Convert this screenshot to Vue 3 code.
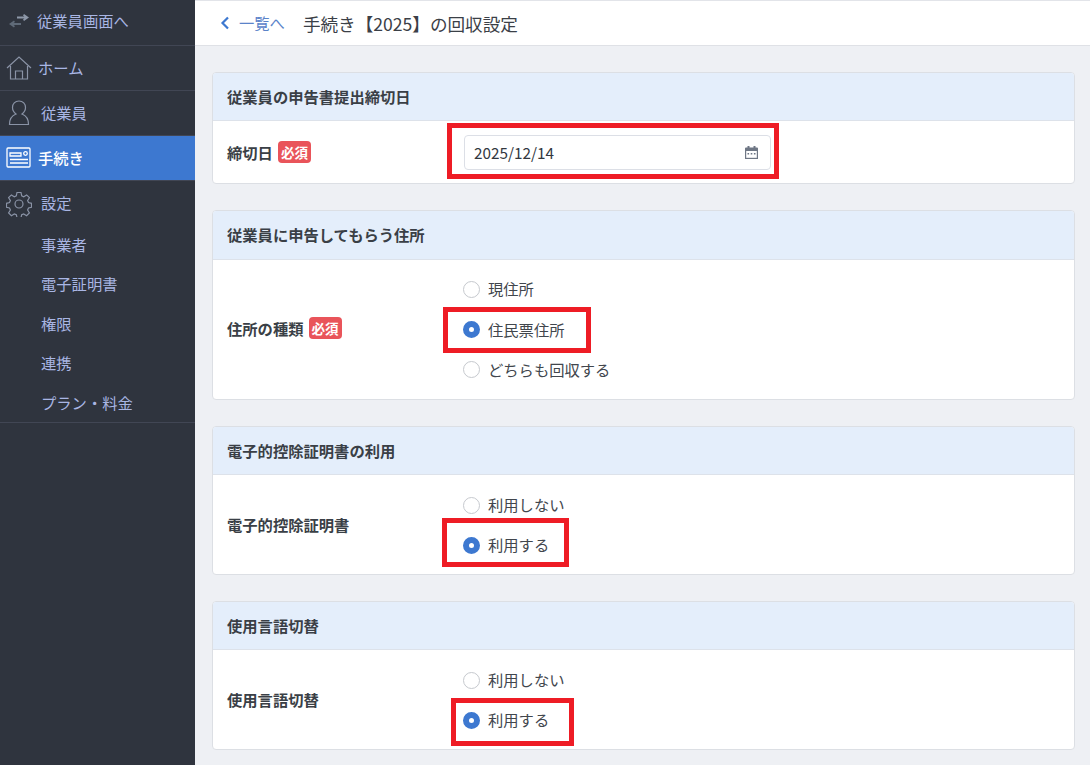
<template>
  <div class="page">
    <aside class="sidebar">
      <div class="side-row top">
        <svg class="swap" width="20" height="14" viewBox="0 0 20 14">
          <path d="M8 3.500h10M14.500 0.800 18.500 3.500 14.500 6.200" fill="none" stroke="#8d97a8" stroke-width="1.800" />
          <path d="M12 10H2M5.500 7.300 1.500 10 5.500 12.700" fill="none" stroke="#5f6a78" stroke-width="1.800" />
        </svg>
        <span>従業員画面へ</span>
      </div>
      <div class="side-row">
        <svg class="ico" width="26" height="24" viewBox="0 0 26 24" fill="none" stroke="#8a93a6" stroke-width="1.200">
          <path d="M1 12 13 1l12 11M4.500 10v13h17V10M9.500 23v-8h7v8" />
        </svg>
        <span>ホーム</span>
      </div>
      <div class="side-row">
        <svg class="ico" width="26" height="26" viewBox="0 0 26 26" fill="none" stroke="#8a93a6" stroke-width="1.200">
          <path d="M13 1c-4 0-6.500 2.800-6.500 6.500 0 3 1.500 5 3.500 6.500-4 1.500-6.500 4.500-6.500 10.500h19c0-6-2.500-9-6.500-10.500 2-1.500 3.500-3.500 3.500-6.500C19.500 3.800 17 1 13 1Z" />
        </svg>
        <span class="wide">従業員</span>
      </div>
      <div class="side-row active">
        <svg class="ico" width="26" height="22" viewBox="0 0 26 22" fill="none" stroke="#fff" stroke-width="1.300">
          <rect x="1" y="1" width="23" height="19" rx="1" />
          <path d="M4 6h11v3H4zM4 12.500h18M4 16h18" />
          <circle cx="19.500" cy="6.500" r="1.800" />
        </svg>
        <span>手続き</span>
      </div>
      <div class="side-row plain">
        <svg class="ico" width="26" height="26" viewBox="0 0 26 26" fill="none" stroke="#8a93a6" stroke-width="1.200">
          <circle cx="13" cy="13" r="4" />
          <path d="M11 1.500h4l.7 3.300 2 .9 2.900-1.800 2.800 2.800-1.800 2.900.9 2 3 .7v4l-3 .7-.9 2 1.800 2.900-2.800 2.800-2.900-1.800-2 .9-.7 2.700h-4l-.7-2.700-2-.9-2.900 1.800-2.800-2.800 1.800-2.900-.9-2-3-.7v-4l3-.7.9-2-1.800-2.900 2.800-2.800 2.900 1.800 2-.9Z" />
        </svg>
        <span class="wide">設定</span>
      </div>
      <ul class="sub">
        <li v-for="item in subItems" :key="item">{{ item }}</li>
      </ul>
    </aside>

    <main class="main">
      <header class="topbar">
        <a class="back">
          <svg width="10" height="14" viewBox="0 0 10 14" fill="none" stroke="#3d78d0" stroke-width="2.200">
            <path d="M8 1.500 2.500 7 8 12.500" />
          </svg>
          <span>一覧へ</span>
        </a>
        <h1>手続き【2025】の回収設定</h1>
      </header>

      <div class="content">
        <section class="card">
          <h2>従業員の申告書提出締切日</h2>
          <div class="body date-body">
            <div class="label has-req">締切日<span class="req">必須</span></div>
            <div class="field">
              <div class="date-input">
                <span>2025/12/14</span>
                <svg width="15" height="15" viewBox="0 0 15 15">
                  <path d="M1 3.500a1 1 0 0 1 1-1h1.500V1h2v1.500h4V1h2v1.500H13a1 1 0 0 1 1 1V14H1Z" fill="#6f7785" />
                  <rect x="2.200" y="6" width="10.600" height="6.800" fill="#fff" />
                  <path d="M3.500 8h1.600v1.600H3.500zM6.700 8h1.600v1.600H6.700zM9.900 8h1.600v1.600H9.900z" fill="#6f7785" />
                </svg>
              </div>
            </div>
            <div class="mark mark-date"></div>
          </div>
        </section>

        <section class="card address">
          <h2>従業員に申告してもらう住所</h2>
          <div class="body radio-body">
            <div class="label has-req">住所の種類<span class="req">必須</span></div>
            <div class="field radios">
              <label v-for="o in addressOptions" :key="o" class="radio">
                <i :class="{ on: o === '住民票住所' }"></i>{{ o }}
              </label>
            </div>
            <div class="mark mark-address"></div>
          </div>
        </section>

        <section class="card">
          <h2>電子的控除証明書の利用</h2>
          <div class="body radio-body">
            <div class="label">電子的控除証明書</div>
            <div class="field radios">
              <label v-for="o in useOptions" :key="o" class="radio">
                <i :class="{ on: o === '利用する' }"></i>{{ o }}
              </label>
            </div>
            <div class="mark mark-cert"></div>
          </div>
        </section>

        <section class="card">
          <h2>使用言語切替</h2>
          <div class="body radio-body">
            <div class="label">使用言語切替</div>
            <div class="field radios">
              <label v-for="o in useOptions" :key="o" class="radio">
                <i :class="{ on: o === '利用する' }"></i>{{ o }}
              </label>
            </div>
            <div class="mark mark-lang"></div>
          </div>
        </section>
      </div>
    </main>
  </div>
</template>

<script setup>
const subItems = ['事業者', '電子証明書', '権限', '連携', 'プラン・料金']
const addressOptions = ['現住所', '住民票住所', 'どちらも回収する']
const useOptions = ['利用しない', '利用する']
</script>

<style>
html,
body {
  margin: 0;
  height: 100%;
  overflow: hidden;
}
</style>

<style scoped>
.page {
  display: flex;
  width: 1090px;
  height: 765px;
  overflow: hidden;
  background: #eef0f4;
  color: #33383f;
  font-family: "Noto Sans CJK JP", "Noto Sans", sans-serif;
  font-size: 15.3px;
}

.sidebar {
  width: 195px;
  flex: none;
  background: #2f343e;
  color: #a9b6e4;
  box-sizing: border-box;
  padding-top: 1px;
}

.side-row {
  display: flex;
  align-items: center;
  height: 45px;
  box-sizing: border-box;
  border-bottom: 1px solid #414654;
  padding-left: 6px;
  gap: 6px;
}

.side-row span {
  margin-bottom: 2px;
}

.side-row.top {
  padding-left: 9px;
  padding-bottom: 4px;
  gap: 8px;
}

.side-row .wide {
  margin-left: 3px;
}

.side-row.active {
  background: #3d78d0;
  color: #fff;
  font-weight: 500;
}

.side-row.plain {
  border-bottom: 0;
}

.side-row.plain span {
  margin-bottom: 4px;
}

.ico {
  flex: none;
}

.sub {
  list-style: none;
  margin: 0;
  padding: 0 0 0 41px;
  border-bottom: 1px solid #414654;
  height: 196px;
}

.sub li {
  height: 39.400px;
  line-height: 37px;
}

.main {
  flex: 1;
  min-width: 0;
}

.topbar {
  display: flex;
  align-items: center;
  height: 46px;
  box-sizing: border-box;
  padding-left: 25px;
  background: #fff;
  border-top: 1px solid #e2e4e9;
  border-bottom: 1px solid #dfe1e6;
}

.back {
  display: flex;
  align-items: center;
  gap: 9px;
  color: #5b83c9;
  margin-right: 18px;
}

.back span {
  margin-bottom: 2px;
}

h1 {
  margin: 0;
  font-size: 17.600px;
  font-weight: 400;
  color: #3b4047;
}

.content {
  display: flex;
  flex-direction: column;
  gap: 26px;
  padding: 26px 15px 0 17px;
}

.card {
  background: #fff;
  border: 1px solid #dcdfe4;
  border-radius: 4px;
  overflow: hidden;
}

h2 {
  margin: 0;
  height: 48px;
  line-height: 47px;
  box-sizing: border-box;
  padding-left: 14px;
  background: #e4eefb;
  border-bottom: 1px solid #dde2ea;
  font-size: 15.300px;
  font-weight: 700;
  color: #3a3f46;
}

.card.address h2 {
  height: 49px;
}

.body {
  position: relative;
  display: flex;
  align-items: center;
  padding-left: 14px;
}

.date-body {
  height: 61px;
  padding-top: 1px;
}

.date-input span {
  margin-bottom: 2px;
}

.radio-body {
  box-sizing: border-box;
  padding-top: 8.500px;
  padding-bottom: 10.100px;
}

.card.address .radio-body {
  padding-top: 8px;
  padding-bottom: 10.300px;
}

.card.address .radio {
  height: 40.400px;
}

.label {
  display: flex;
  align-items: center;
  width: 237px;
  flex: none;
  font-weight: 700;
  color: #3a3f46;
}

.label.has-req {
  margin-bottom: 2px;
}

.req {
  margin-left: 5px;
  padding: 0 3px;
  background: #e9545a;
  border-radius: 4px;
  color: #fff;
  font-size: 13.500px;
  line-height: 22px;
  font-weight: 700;
}

.date-input {
  display: flex;
  align-items: center;
  justify-content: space-between;
  width: 307px;
  height: 35px;
  box-sizing: border-box;
  padding: 0 11px 0 9px;
  border: 1px solid #dcdfe6;
  border-radius: 4px;
}

.radios {
  display: flex;
  flex-direction: column;
  margin-left: -1px;
}

.radio {
  display: flex;
  align-items: center;
  height: 40.200px;
  gap: 8px;
  color: #41464d;
}

.radio i {
  width: 15px;
  height: 15px;
  margin-top: 2px;
  border: 1px solid #c6c9ce;
  border-radius: 50%;
  background: #fff;
  box-sizing: content-box;
}

.radio i.on {
  width: 5px;
  height: 5px;
  border: 6px solid #3d78d0;
}

.mark {
  position: absolute;
  border: 5px solid #ee1c25;
  box-sizing: border-box;
  pointer-events: none;
}

.mark-date {
  left: 234px;
  top: 2px;
  width: 332px;
  height: 56px;
}

.mark-address {
  left: 230px;
  top: 47px;
  width: 148px;
  height: 46px;
}

.mark-cert {
  left: 229px;
  top: 43px;
  width: 127px;
  height: 49px;
}

.mark-lang {
  left: 238px;
  top: 48px;
  width: 123px;
  height: 48px;
}
</style>
